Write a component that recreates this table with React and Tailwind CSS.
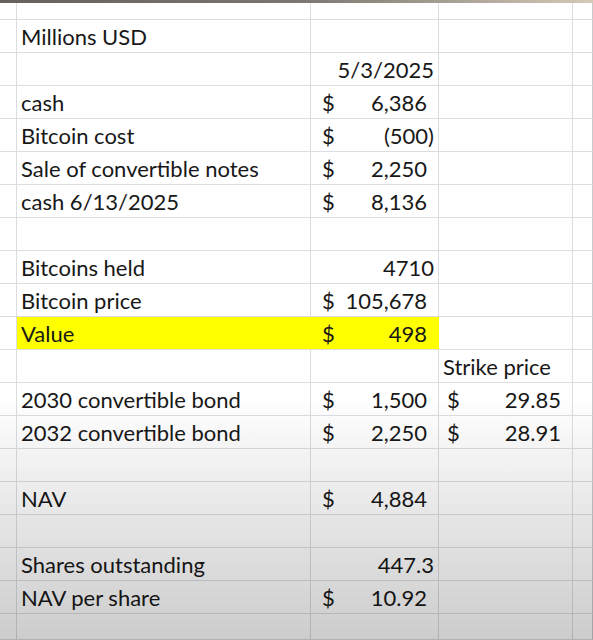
const rows = [
  ["Millions USD", null, null],
  [null, { text: "5/3/2025" }, null],
  ["cash", { acct: "6,386" }, null],
  ["Bitcoin cost", { acct: "(500)", neg: true }, null],
  ["Sale of convertible notes", { acct: "2,250" }, null],
  ["cash 6/13/2025", { acct: "8,136" }, null],
  [null, null, null],
  ["Bitcoins held", { text: "4710" }, null],
  ["Bitcoin price", { acct: "105,678" }, null],
  ["Value", { acct: "498" }, null, true],
  [null, null, { label: "Strike price" }],
  ["2030 convertible bond", { acct: "1,500" }, { acct: "29.85" }],
  ["2032 convertible bond", { acct: "2,250" }, { acct: "28.91" }],
  [null, null, null],
  ["NAV", { acct: "4,884" }, null],
  [null, null, null],
  ["Shares outstanding", { text: "447.3" }, null],
  ["NAV per share", { acct: "10.92" }, null],
];

function ValueCell({ v, dollarPad }) {
  if (!v) return null;
  if (v.label) return <span className="pl-[4px]">{v.label}</span>;
  if (v.text) return <span className="ml-auto pr-[4px]">{v.text}</span>;
  return (
    <>
      <span className={dollarPad}>$</span>
      <span className={`ml-auto ${v.neg ? "pr-[4px]" : "pr-[11px]"}`}>{v.acct}</span>
    </>
  );
}

function Row({ label, c, d, hl, last }) {
  const h = last ? "h-[26px]" : "h-[33px]";
  const base = `${h} flex items-end pb-[4px] border-b border-[#dcdde0]`;
  return (
    <>
      <div className={`${base} border-r`} />
      <div className={`${base} pl-[4px] whitespace-nowrap ${hl ? "bg-[#ffff00] border-r-[#ffff00] border-r" : "border-r"}`}>
        {label}
      </div>
      <div className={`${base} border-r ${hl ? "bg-[#ffff00] border-r-[#ffff00]" : ""}`}>
        <ValueCell v={c} dollarPad="pl-[11px]" />
      </div>
      <div className={`${base} border-r whitespace-nowrap`}>
        <ValueCell v={d} dollarPad="pl-[8px]" />
      </div>
      <div className={`${base} border-r border-r-[#c9cacc]`} />
    </>
  );
}

export default function App() {
  return (
    <div className="relative w-[593px] h-[640px] overflow-hidden bg-white text-[#181818] text-[22px] leading-none font-['Lato',sans-serif]">
      {/* video frame edge */}
      <div className="h-[3px] bg-gradient-to-r from-[#67605d] via-[#7d756f] to-[#d3cab8]" />
      <div className="grid grid-cols-[17px_294px_128px_134px_20px]">
        <div className="h-[17px] border-b border-r border-[#dcdde0]" />
        <div className="h-[17px] border-b border-r border-[#dcdde0]" />
        <div className="h-[17px] border-b border-r border-[#dcdde0]" />
        <div className="h-[17px] border-b border-r border-[#dcdde0]" />
        <div className="h-[17px] border-b border-r border-[#dcdde0] border-r-[#c9cacc]" />
        {rows.map(([label, c, d, hl], i) => (
          <Row key={i} label={label} c={c} d={d} hl={hl} />
        ))}
        <Row last />
      </div>
      {/* shading at the bottom of the frame */}
      <div className="pointer-events-none absolute inset-0 bg-gradient-to-b from-transparent from-[62%] to-[#00000033]" />
    </div>
  );
}
